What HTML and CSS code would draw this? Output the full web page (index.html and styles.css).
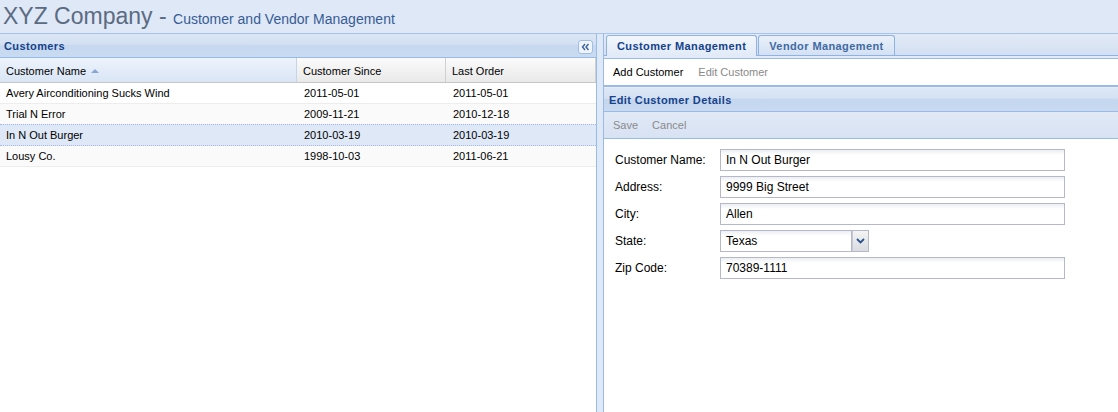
FILE: index.html
```html
<!DOCTYPE html>
<html>
<head>
<meta charset="utf-8">
<link rel="stylesheet" href="styles.css">
</head>
<body>
<div class="app">
  <header class="topbar">
    <span class="title">XYZ Company</span><span class="dash"> - </span><span class="subtitle">Customer and Vendor Management</span>
  </header>
  <div class="main">
    <section class="left">
      <div class="phead">
        <span class="phead-title">Customers</span>
        <span class="tool">
          <svg width="15" height="14" viewBox="0 0 15 14">
            <rect x="0.5" y="0.5" width="14" height="13" rx="2.5" fill="#f1f5fb" stroke="#9fbde6"/>
            <path d="M7 4 L4.5 7 L7 10 M10.5 4 L8 7 L10.5 10" fill="none" stroke="#3a63a0" stroke-width="1.4"/>
          </svg>
        </span>
      </div>
      <div class="grid">
        <div class="ghead">
          <div class="gcell gh c1 sorted">Customer Name <span class="arrow"></span></div>
          <div class="gcell gh c2">Customer Since</div>
          <div class="gcell gh c3">Last Order</div>
        </div>
        <div class="grow">
          <div class="gcell c1">Avery Airconditioning Sucks Wind</div>
          <div class="gcell c2">2011-05-01</div>
          <div class="gcell c3">2011-05-01</div>
        </div>
        <div class="grow alt">
          <div class="gcell c1">Trial N Error</div>
          <div class="gcell c2">2009-11-21</div>
          <div class="gcell c3">2010-12-18</div>
        </div>
        <div class="grow selected">
          <div class="gcell c1">In N Out Burger</div>
          <div class="gcell c2">2010-03-19</div>
          <div class="gcell c3">2010-03-19</div>
        </div>
        <div class="grow alt">
          <div class="gcell c1">Lousy Co.</div>
          <div class="gcell c2">1998-10-03</div>
          <div class="gcell c3">2011-06-21</div>
        </div>
      </div>
    </section>
    <div class="splitter"></div>
    <section class="right">
      <div class="tabstrip">
        <div class="tab active">Customer Management</div>
        <div class="tab">Vendor Management</div>
      </div>
      <div class="strip-spacer"></div>
      <div class="tbar1">
        <span class="tb-item">Add Customer</span>
        <span class="tb-item disabled">Edit Customer</span>
      </div>
      <div class="inner">
        <div class="phead2">Edit Customer Details</div>
        <div class="tbar2">
          <span class="tb-item disabled">Save</span>
          <span class="tb-item disabled">Cancel</span>
        </div>
        <div class="form">
          <div class="frow">
            <label class="flabel">Customer Name:</label>
            <div class="field">In N Out Burger</div>
          </div>
          <div class="frow">
            <label class="flabel">Address:</label>
            <div class="field">9999 Big Street</div>
          </div>
          <div class="frow">
            <label class="flabel">City:</label>
            <div class="field">Allen</div>
          </div>
          <div class="frow">
            <label class="flabel">State:</label>
            <div class="combo">
              <div class="combo-text">Texas</div>
              <div class="trigger">
                <svg width="9" height="6" viewBox="0 0 9 6"><path d="M1 1 L4.5 4.5 L8 1" fill="none" stroke="#2e518c" stroke-width="1.8"/></svg>
              </div>
            </div>
          </div>
          <div class="frow">
            <label class="flabel">Zip Code:</label>
            <div class="field">70389-1111</div>
          </div>
        </div>
      </div>
    </section>
  </div>
</div>
</body>
</html>
```

FILE: styles.css
```css
* { box-sizing: border-box; }
html, body { margin: 0; padding: 0; }
body {
  font-family: "Liberation Sans", Arial, sans-serif;
  font-size: 11px;
  color: #000;
  background: #fff;
}
.app {
  width: 1118px;
  height: 412px;
  display: flex;
  flex-direction: column;
  overflow: hidden;
}
.topbar {
  height: 34px;
  background: #dfe8f6;
  border-bottom: 1px solid #a9c3e8;
  padding-left: 3px;
  line-height: 33px;
  white-space: nowrap;
}
.title {
  font-size: 23px;
  color: #5a6b82;
}
.dash {
  font-size: 23px;
  color: #5a6b82;
}
.subtitle {
  font-size: 14px;
  color: #375c95;
}
.main {
  flex: 1;
  display: flex;
  min-height: 0;
}
.left {
  width: 597px;
  border-right: 1px solid #99bbe8;
  display: flex;
  flex-direction: column;
  background: #fff;
}
.phead {
  height: 24px;
  border-bottom: 1px solid #99bbe8;
  background: linear-gradient(#dbe6f5 0%, #d3e0f2 45%, #c6d8ef 50%, #c9dbf1 100%);
  display: flex;
  align-items: center;
  justify-content: space-between;
  padding: 1px 3px 0 4px;
}
.phead-title, .phead2 {
  font-weight: bold;
  color: #15428b;
  letter-spacing: 0.4px;
}
.tool {
  display: flex;
  width: 15px;
  height: 14px;
  margin-top: 1px;
}
.grid {
  display: flex;
  flex-direction: column;
}
.ghead {
  display: flex;
  height: 25px;
  border-bottom: 1px solid #c6c6c6;
}
.gcell {
  padding: 0 6px;
  white-space: nowrap;
  overflow: hidden;
}
.c1 { width: 297px; }
.c2 { width: 149px; }
.c3 { width: 150px; }
.gh {
  line-height: 14px;
  padding-top: 6px;
  background: linear-gradient(#fbfbfb, #e9e9e9);
  border-right: 1px solid #d0d0d0;
}
.gh.sorted {
  background: linear-gradient(#edf3fc, #d9e5f5);
  border-right-color: #c6d4e8;
}
.arrow {
  display: inline-block;
  width: 0;
  height: 0;
  border-left: 4px solid transparent;
  border-right: 4px solid transparent;
  border-bottom: 4px solid #8aa6d3;
  margin-left: 2px;
  vertical-align: 2px;
}
.grow {
  display: flex;
  height: 21px;
  line-height: 20px;
  border-bottom: 1px solid #ededed;
}
.grow.alt { background: #fafafa; }
.grow.selected {
  background: #dfe8f6;
  border-top: 1px dotted #a3bae9;
  border-bottom: 1px dotted #a3bae9;
  margin-top: -1px;
  height: 22px;
}
.grow .gcell { padding-left: 6px; }
.grow .c2, .grow .c3 { padding-left: 7px; }
.splitter {
  width: 6px;
  background: #dfe8f6;
}
.right {
  flex: 1;
  border-left: 1px solid #99bbe8;
  display: flex;
  flex-direction: column;
  background: #fff;
}
.tabstrip {
  height: 21px;
  background: linear-gradient(#e2eaf7, #d3e0f2);
  display: flex;
  align-items: flex-end;
  padding-left: 2px;
  gap: 1px;
}
.tab {
  height: 20px;
  padding: 0 10px;
  border: 1px solid #8db2e3;
  border-bottom: none;
  border-radius: 3px 3px 0 0;
  background: linear-gradient(#e9f0fa, #d4e1f3);
  color: #416aa3;
  font-weight: bold;
  letter-spacing: 0.4px;
  line-height: 20px;
  white-space: nowrap;
}
.tab.active {
  background: linear-gradient(#f2f6fc, #e1eaf7);
  color: #15428b;
  margin-bottom: -1px;
  height: 21px;
  position: relative;
  z-index: 1;
}
.strip-spacer {
  height: 4px;
  border-top: 1px solid #8db2e3;
  border-bottom: 1px solid #99bbe8;
  background: #e3ebf8;
}
.tbar1 {
  height: 28px;
  display: flex;
  align-items: center;
  gap: 15px;
  padding-left: 9px;
  border-bottom: 2px solid #99bbe8;
  background: #fff;
}
.tb-item { white-space: nowrap; }
.tb-item.disabled { color: #8a8a8a; }
.inner {
  flex: 1;
  display: flex;
  flex-direction: column;
}
.phead2 {
  height: 25px;
  border-bottom: 1px solid #99bbe8;
  background: linear-gradient(#dde7f5 0%, #d4e1f3 45%, #c5d7ef 50%, #c8d9f0 100%);
  padding: 6px 0 0 5px;
  line-height: 13px;
  border-top: 1px solid #e6eef9;
}
.tbar2 {
  height: 27px;
  display: flex;
  align-items: center;
  gap: 14px;
  padding-left: 9px;
  background: linear-gradient(#e1e9f6, #d7e2f3);
  border-bottom: 1px solid #99bbe8;
}
.form {
  padding: 10px 0 0 11px;
  display: flex;
  flex-direction: column;
  gap: 5px;
}
.frow {
  display: flex;
  align-items: center;
  height: 22px;
}
.flabel {
  width: 105px;
  font-size: 12px;
}
.field, .combo-text {
  height: 22px;
  border: 1px solid #b5b8c8;
  background: linear-gradient(#eceef2, #fff 5px);
  font-size: 12px;
  line-height: 20px;
  padding-left: 5px;
}
.field { width: 345px; }
.combo {
  display: flex;
  width: 149px;
  height: 22px;
}
.combo-text { flex: 1; }
.trigger {
  width: 17px;
  height: 22px;
  border: 1px solid #b5b8c8;
  border-left: 1px solid #c5c8d4;
  background: linear-gradient(#f4f4f4, #d9dbe0);
  display: flex;
  align-items: center;
  justify-content: center;
}
```
